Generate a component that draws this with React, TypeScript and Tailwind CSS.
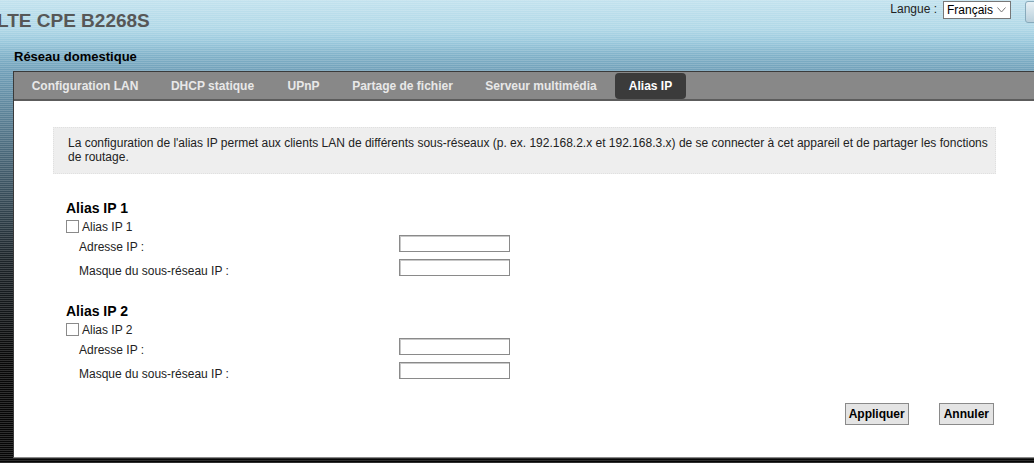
import React from 'react';

const tabs = [
  { label: 'Configuration LAN', w: 'w-[142px]' },
  { label: 'DHCP statique', w: 'w-[113px]' },
  { label: 'UPnP', w: 'w-[69px]' },
  { label: 'Partage de fichier', w: 'w-[129px]' },
  { label: 'Serveur multimédia', w: 'w-[148px]' },
];

// --- one "Alias IP n" block ---
const AliasBlock: React.FC<{ n: number }> = ({ n }) => (
  <div className="pl-[13px]">
    <h3 className="text-[14px] leading-[16px] font-bold text-black">Alias IP {n}</h3>
    <label className="mt-[2px] flex h-[17px] items-center gap-[3px] text-[12px] text-[#222]">
      <input type="checkbox" className="h-[13px] w-[13px] appearance-none border border-[#8a8a8a] bg-white" />
      Alias IP {n}
    </label>
    <div className="flex h-[24px] items-start">
      <span className="w-[333px] shrink-0 pl-[13px] pt-[5px] text-[12px] leading-[14px] text-[#222]">Adresse IP :</span>
      <input className="h-[17px] w-[111px] border border-[#8a8a8a] bg-white shadow-[inset_1px_1px_0_#c8c8c8]" />
    </div>
    <div className="flex h-[24px] items-start">
      <span className="w-[333px] shrink-0 pl-[13px] pt-[5px] text-[12px] leading-[14px] text-[#222]">Masque du sous-réseau IP :</span>
      <input className="h-[17px] w-[111px] border border-[#8a8a8a] bg-white shadow-[inset_1px_1px_0_#c8c8c8]" />
    </div>
  </div>
);

export default function App() {
  return (
    <div className="h-[463px] w-full overflow-hidden font-['Liberation_Sans',Arial,sans-serif] bg-[repeating-linear-gradient(180deg,rgba(255,255,255,0.16)_0px,rgba(255,255,255,0.16)_1px,transparent_1px,transparent_2px),linear-gradient(180deg,#c2e2ee_0px,#b0d8e7_28px,#99c8dc_42px,#80b1c8_56px,#709fb8_72px,#4b6a7c_150px,#1c2429_260px,#080808_360px,#050505_463px)]">
      {/* header */}
      <div className="flex h-[44px] items-start justify-between">
        <div className="ml-[-3px] mt-[11px] text-[19px] font-bold leading-[20px] text-[#575757]">LTE CPE B2268S</div>
        <div className="mr-[-11px] flex items-start">
          <span className="mt-[2px] text-[12px] leading-[14px] text-[#222]">Langue :</span>
          <div className="ml-[6px] mt-[1px] flex h-[18px] w-[68px] items-center justify-between border border-[#777] bg-white pl-[3px] pr-[4px]">
            <span className="text-[12px] leading-[14px] text-black">Français</span>
            <svg width="9" height="6" viewBox="0 0 9 6" fill="none" stroke="#777" strokeWidth="1">
              <path d="M0.5 0.5 L4.5 5 L8.5 0.5" />
            </svg>
          </div>
          <div className="ml-[14px] mt-[1px] h-[22px] w-[20px] rounded-[3px] border border-[#8ab] bg-[linear-gradient(180deg,#e8f1f5,#b9d0dc)]" />
        </div>
      </div>

      <div className="h-[27px] pl-[14px] pt-[5px] text-[13px] font-bold leading-[16px] text-black">Réseau domestique</div>

      {/* main frame */}
      <div className="ml-[13px] h-[387px] border-b border-l border-t border-b-[#8a8a8a] border-l-[#3a3a3a] border-t-[#3a3a3a] bg-white">
        <div className="flex h-[29px] border-b-2 border-[#5c5c5c] bg-[#888888]">
          {tabs.map((t) => (
            <div key={t.label} className={`${t.w} flex items-center justify-center text-[12px] font-bold text-[#e8e8e8]`}>
              {t.label}
            </div>
          ))}
          <div className="mt-[1px] flex h-[26px] w-[71px] items-center justify-center rounded-[4px] bg-[#3b3b3b] text-[12px] font-bold text-white">
            Alias IP
          </div>
        </div>

        <div className="pl-[39px]">
          <div className="mt-[26px] w-[943px] border border-dotted border-[#e0e0e0] bg-[#eeeeee] pb-[9px] pl-[14px] pr-[4px] pt-[8px] text-[12px] leading-[14px] text-[#222]">
            La configuration de l'alias IP permet aux clients LAN de différents sous-réseaux (p. ex. 192.168.2.x et 192.168.3.x) de se connecter à cet appareil et de partager les fonctions de routage.
          </div>

          <div className="mt-[26px]">
            <AliasBlock n={1} />
          </div>
          <div className="mt-[20px]">
            <AliasBlock n={2} />
          </div>

          <div className="mt-[17px] flex w-[943px] justify-end gap-[30px] pr-[2px]">
            <button className="h-[22px] border border-[#8a8a8a] bg-[#e4e4e4] px-[3px] text-[12px] font-bold text-black">Appliquer</button>
            <button className="h-[22px] border border-[#8a8a8a] bg-[#e4e4e4] px-[4px] text-[12px] font-bold text-black">Annuler</button>
          </div>
        </div>
      </div>
    </div>
  );
}
